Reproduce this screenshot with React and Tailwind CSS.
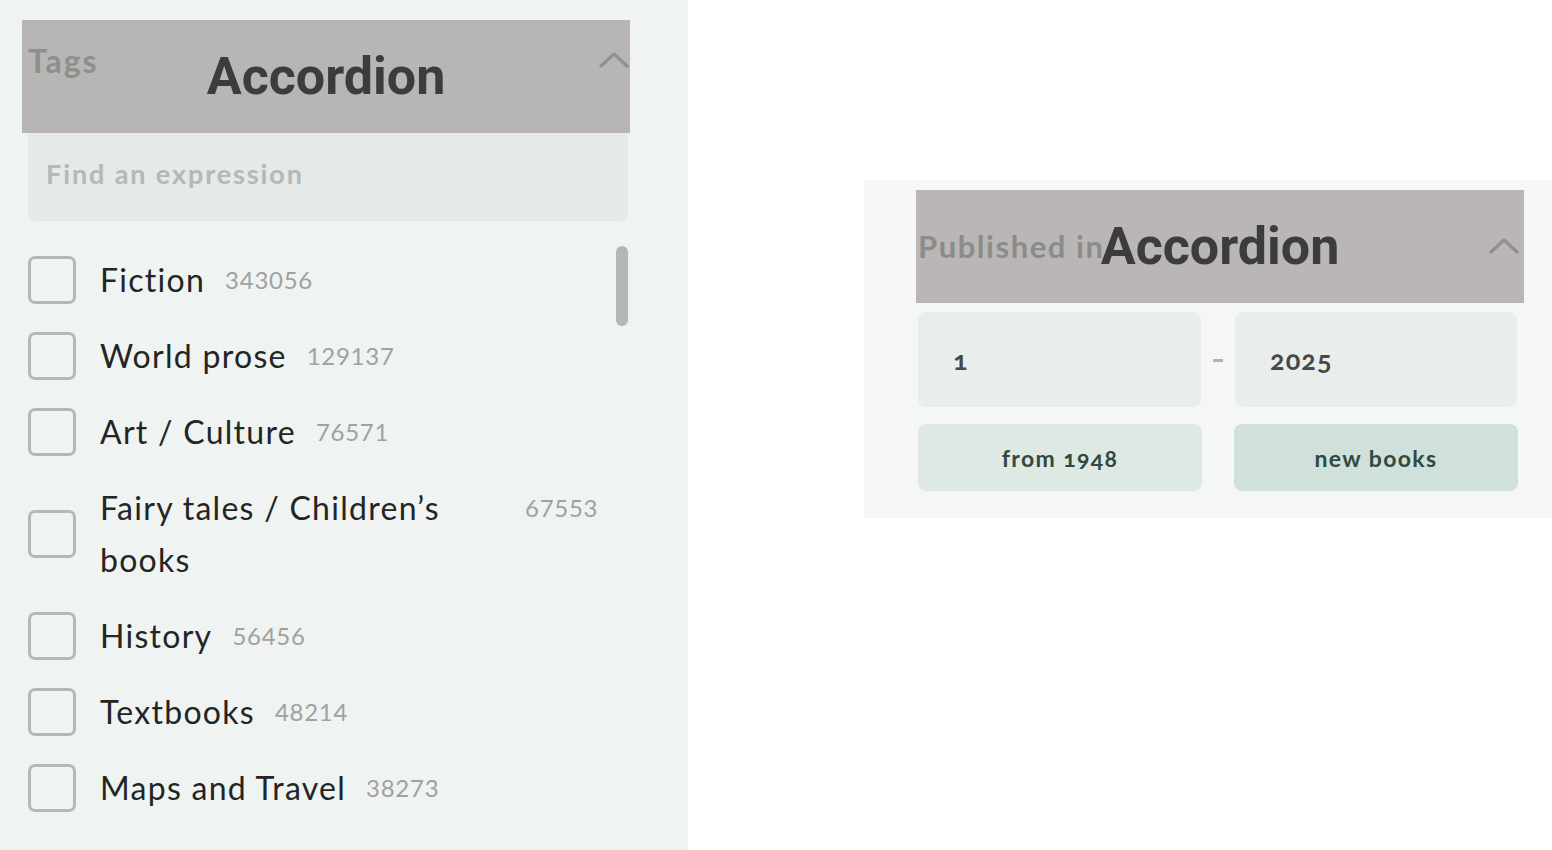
import React from "react";

const raleway = "font-['Lato','Open_Sans',sans-serif]";

function Chevron() {
  return (
    <svg width="30" height="16" viewBox="0 0 30 16" fill="none">
      <polyline
        points="2,14 15,2 28,14"
        stroke="#8f918f"
        strokeWidth="3.2"
        strokeLinecap="round"
        strokeLinejoin="round"
      />
    </svg>
  );
}

const tags = [
  ["Fiction", "343056"],
  ["World prose", "129137"],
  ["Art / Culture", "76571"],
  ["Fairy tales / Children’s books", "67553"],
  ["History", "56456"],
  ["Textbooks", "48214"],
  ["Maps and Travel", "38273"],
];

function Row({ label, count }) {
  return (
    <div className="flex items-center gap-[24px]">
      <div className="w-[48px] h-[48px] shrink-0 rounded-[7px] border-[3px] border-[#b5b8b6]" />
      <div className="flex items-start gap-[20px]">
        <span className={`${raleway} max-w-[405px] text-[32px] leading-[52px] tracking-[0.04em] text-[#232524]`}>
          {label}
        </span>
        <span className={`${raleway} shrink-0 text-[24px] leading-[52px] tracking-[0.03em] text-[#9fa2a0]`}>
          {count}
        </span>
      </div>
    </div>
  );
}

function AccordionLabel() {
  return (
    <div className="absolute inset-0 flex items-center justify-center pointer-events-none">
      <span className="font-['Roboto',sans-serif] font-bold text-[52px] leading-none text-[#3b3c3b]">
        Accordion
      </span>
    </div>
  );
}

export default function App() {
  return (
    <div className="flex w-[1552px] h-[850px] bg-white overflow-hidden">
      {/* Left panel */}
      <div className="w-[688px] h-[850px] shrink-0 bg-[#eff3f1] pt-[20px]">
        <div className="relative ml-[22px] w-[608px] h-[113px] bg-[#b8b6b4] flex items-start justify-between pl-[6px] pr-[1px] pt-[25px]">
          <span className={`${raleway} font-bold text-[32px] leading-[32px] tracking-[0.06em] text-[#8d8f8d]`}>Tags</span>
          <div className="pt-[7px]">
            <Chevron />
          </div>
          <AccordionLabel />
        </div>
        <div className="ml-[28px] w-[600px] h-[88px] rounded-b-[8px] bg-[#e5e9e7] flex items-center pl-[18px] pb-[6px]">
          <span className={`${raleway} font-bold text-[27px] tracking-[0.07em] text-[#b4b8b6]`}>Find an expression</span>
        </div>
        <div className="relative ml-[28px] w-[600px] mt-[33px]">
          <div className="flex flex-col gap-[24px]">
            {tags.map(([l, c]) => (
              <Row key={l} label={l} count={c} />
            ))}
          </div>
          <div className="absolute right-0 top-[-8px] w-[12px] h-[80px] rounded-full bg-[#b4b7b5]" />
        </div>
      </div>

      {/* Right area */}
      <div className="flex-1 pt-[180px] pl-[176px]">
        <div className="w-[688px] h-[338px] bg-[#f5f7f6] pt-[10px]">
          <div className="relative ml-[52px] w-[608px] h-[113px] bg-[#bab6b5] flex items-start justify-between pl-[2px] pr-[5px] pt-[40px]">
            <span className={`${raleway} font-bold text-[31px] leading-[32px] tracking-[0.05em] text-[#8a8c8a]`}>Published in</span>
            <div className="pt-[8px]">
              <Chevron />
            </div>
            <AccordionLabel />
          </div>
          <div className="ml-[54px] mt-[9px] flex items-center">
            <div className="w-[283px] h-[95px] rounded-[8px] bg-[#e9edec] flex items-center pl-[35px] pt-[1px]">
              <span className={`${raleway} font-bold text-[27px] tracking-[0.04em] [font-feature-settings:'onum'] text-[#464846]`}>1</span>
            </div>
            <div className="w-[34px] flex justify-center">
              <div className="w-[10px] h-[3px] bg-[#b1b5b3] mt-[2px]" />
            </div>
            <div className="w-[282px] h-[95px] rounded-[8px] bg-[#e9edec] flex items-center pl-[35px] pt-[1px]">
              <span className={`${raleway} font-bold text-[27px] tracking-[0.04em] [font-feature-settings:'onum'] text-[#464846]`}>2025</span>
            </div>
          </div>
          <div className="ml-[54px] mt-[17px] flex gap-[32px]">
            <div className="w-[284px] h-[67px] rounded-[8px] bg-[#dee9e4] flex items-center justify-center pt-[2px]">
              <span className={`${raleway} font-bold text-[23px] tracking-[0.06em] [font-feature-settings:'onum'] text-[#2f4a3f]`}>from 1948</span>
            </div>
            <div className="w-[284px] h-[67px] rounded-[8px] bg-[#d0e0da] flex items-center justify-center pt-[2px]">
              <span className={`${raleway} font-bold text-[23px] tracking-[0.06em] text-[#2f4a3f]`}>new books</span>
            </div>
          </div>
        </div>
      </div>
    </div>
  );
}
